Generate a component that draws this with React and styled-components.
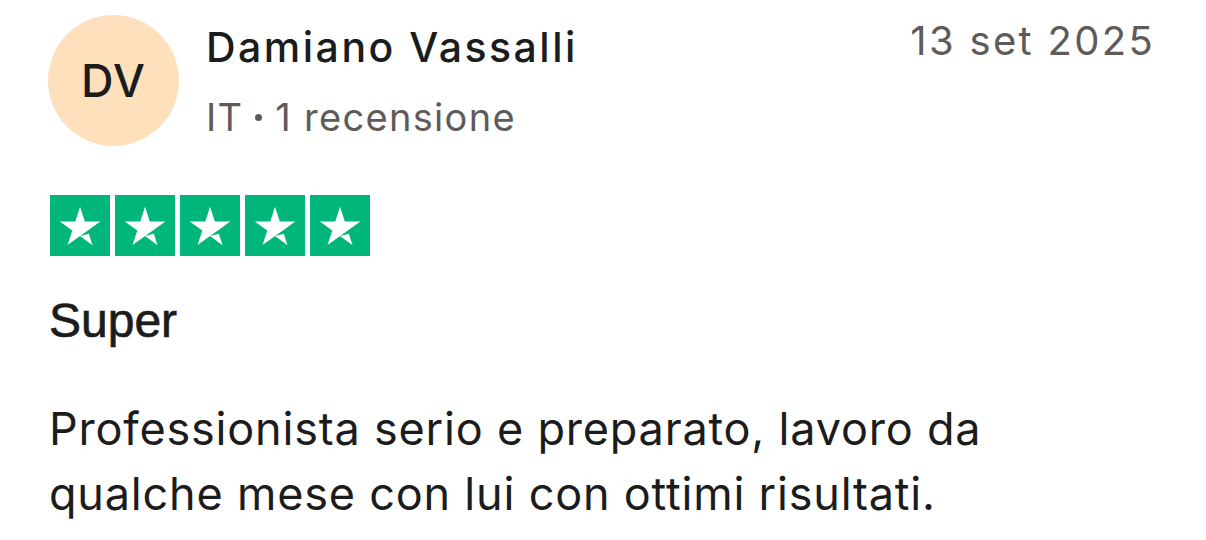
import React from "react";
import styled, { createGlobalStyle } from "styled-components";

const Global = createGlobalStyle`
  html, body { margin: 0; padding: 0; background: #ffffff; }
  body { font-family: Inter, "Noto Sans", sans-serif; color: #1c1c1c; }
`;

const Card = styled.article`
  width: 1206px;
  height: 540px;
  box-sizing: border-box;
  padding: 15px 51px 0 48px;
  background: #ffffff;
  overflow: hidden;
`;

const Header = styled.header`
  display: flex;
  align-items: flex-start;
`;

const Avatar = styled.div`
  flex: none;
  width: 131px;
  height: 131px;
  border-radius: 50%;
  background: #fee0bd;
  display: flex;
  align-items: center;
  justify-content: center;
  font-family: Inter, sans-serif;
  font-weight: 500;
  font-size: 45px;
  color: #1c1c1c;
  letter-spacing: 1px;
`;

const Who = styled.div`
  flex: 1;
  margin-left: 27px;
  margin-top: 8px;
  display: flex;
  flex-direction: column;
  gap: 23px;
`;

const Name = styled.div`
  font-family: Inter, sans-serif;
  font-weight: 500;
  font-size: 41px;
  line-height: 48px;
  letter-spacing: 2.5px;
  color: #1c1c1c;
`;

const Meta = styled.div`
  font-family: Inter, sans-serif;
  font-weight: 400;
  font-size: 38px;
  line-height: 46px;
  letter-spacing: 1.3px;
  color: #5e5b58;
`;

const Dot = styled.span`
  display: inline-block;
  width: 7px;
  height: 7px;
  border-radius: 50%;
  background: #5e5b58;
  vertical-align: middle;
  margin: 0 13px 0 12px;
  position: relative;
  top: -3px;
`;

const DateText = styled.time`
  margin-top: 2px;
  font-family: Inter, sans-serif;
  font-size: 40px;
  line-height: 48px;
  color: #5e5b58;
  letter-spacing: 2.3px;
`;

const Stars = styled.div`
  display: flex;
  gap: 5px;
  margin-top: 49px;
  margin-left: 2px;
`;

const StarBox = styled.span`
  width: 60px;
  height: 61px;
  background: ${(p) => (p.$on ? "#00b67a" : "#dcdce6")};
  display: flex;
  align-items: center;
  justify-content: center;
`;

const Title = styled.h2`
  margin: 37px 0 0 1px;
  font-family: "Liberation Sans", Arial, sans-serif;
  font-weight: 400;
  font-size: 48px;
  line-height: 56px;
  color: #1c1c1c;
  -webkit-text-stroke: 0.7px #1c1c1c;
`;

const Body = styled.p`
  margin: 47px 0 0 1px;
  max-width: 1000px;
  font-family: Inter, sans-serif;
  font-weight: 400;
  font-size: 45px;
  line-height: 65px;
  letter-spacing: 0.8px;
  color: #1c1c1c;
`;

const Star = () => (
  <svg width="58" height="58" viewBox="0 0 96 96" aria-hidden="true">
    <path
      d="M48.07 64.69L62.67 60.99L68.77 79.79L48.07 64.69ZM81.66 40.39H55.97L48.07 16.2L40.17 40.39H14.48L35.27 55.39L27.37 79.59L48.17 64.59L60.97 55.39L81.66 40.39Z"
      fill="#ffffff"
    />
  </svg>
);

export default function App() {
  return (
    <>
      <Global />
      <Card>
        <Header>
          <Avatar>DV</Avatar>
          <Who>
            <Name>Damiano Vassalli</Name>
            <Meta>
              IT<Dot />1 recensione
            </Meta>
          </Who>
          <DateText>13 set 2025</DateText>
        </Header>
        <Stars>
          {[0, 1, 2, 3, 4].map((i) => (
            <StarBox key={i} $on>
              <Star />
            </StarBox>
          ))}
        </Stars>
        <Title>Super</Title>
        <Body>
          Professionista serio e preparato, lavoro da qualche mese con lui con
          ottimi risultati.
        </Body>
      </Card>
    </>
  );
}
